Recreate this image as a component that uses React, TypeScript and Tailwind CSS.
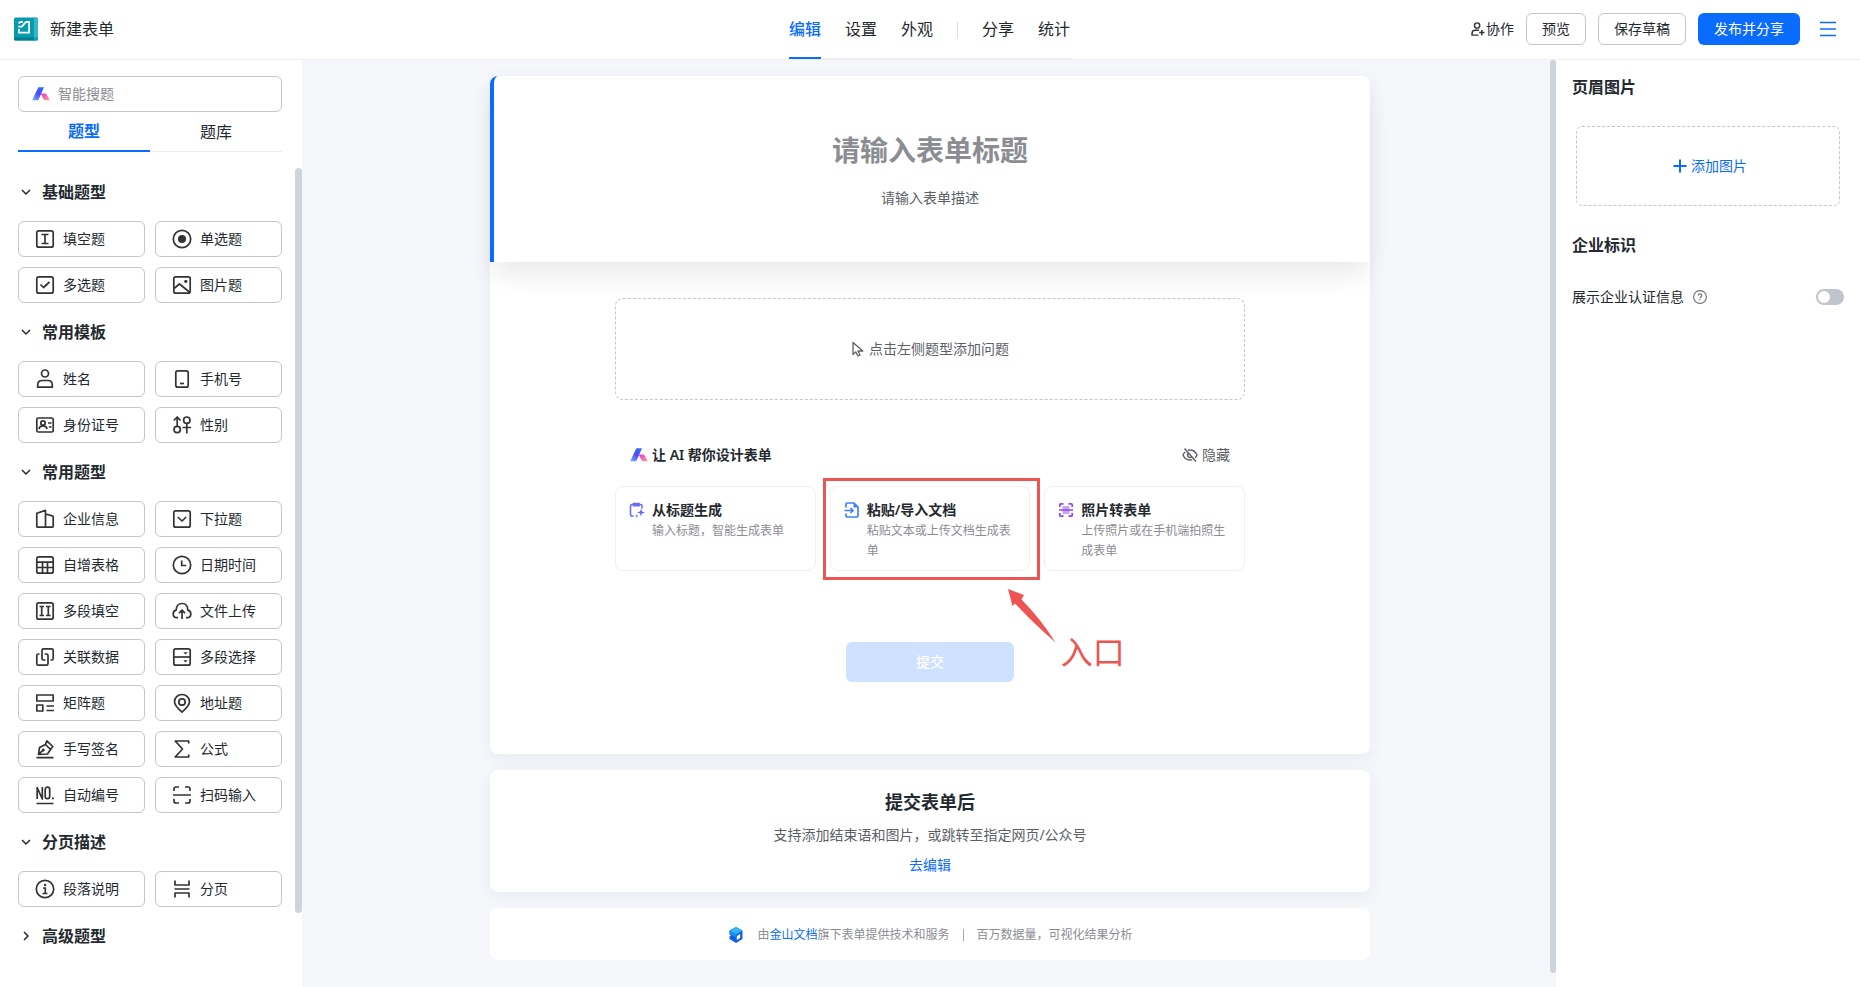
import { ReactNode, useState } from "react";

type IconProps = Readonly<{ children: ReactNode }>;

type QuestionType = {
  label: string;
  icon: ReactNode;
};

type QuestionGroup = {
  title: string;
  open: boolean;
  items: QuestionType[];
};

function Icon({ children }: IconProps) {
  return (
    <svg
      viewBox="0 0 20 20"
      className="size-5 shrink-0"
      fill="none"
      stroke="#333"
      strokeWidth="1.7"
      strokeLinejoin="round"
      aria-hidden="true"
    >
      {children}
    </svg>
  );
}

const frame = <rect x="1.8" y="1.8" width="16.4" height="16.4" rx="2" />;

const groups: QuestionGroup[] = [
  {
    title: "基础题型",
    open: true,
    items: [
      {
        label: "填空题",
        icon: <Icon>{frame}<path d="M6.5 5.5h7M6.5 14.5h7M10 5.5v9" /></Icon>,
      },
      {
        label: "单选题",
        icon: <Icon><circle cx="10" cy="10" r="8.7" /><circle cx="10" cy="10" r="4" fill="#333" stroke="none" /></Icon>,
      },
      {
        label: "多选题",
        icon: <Icon>{frame}<path d="M5.5 9.5l3 3 6-5.5" /></Icon>,
      },
      {
        label: "图片题",
        icon: <Icon>{frame}<path d="M2 13.5l5.5-4.5 10.5 8.5" /><circle cx="13.8" cy="6.3" r="1.6" fill="#333" stroke="none" /></Icon>,
      },
    ],
  },
  {
    title: "常用模板",
    open: true,
    items: [
      {
        label: "姓名",
        icon: <Icon><circle cx="10" cy="4.5" r="3.5" /><path d="M2.7 18.2V16c0-2.8 2-4.5 4.5-4.5h5.6c2.5 0 4.5 1.7 4.5 4.5v2.2z" /></Icon>,
      },
      {
        label: "手机号",
        icon: <Icon><rect x="3.8" y="1.8" width="12.4" height="16.4" rx="2" /><path d="M8 14.5h4" /></Icon>,
      },
      {
        label: "身份证号",
        icon: <Icon><rect x="1.8" y="3" width="16.4" height="14" rx="1.5" /><circle cx="8" cy="8" r="2.2" /><path d="M4 14.2c.3-2.5 1.800-3.400 4-3.400s3.700.9 4 3.400M13 8h3.500M13.800 12h2.700" /></Icon>,
      },
      {
        label: "性别",
        icon: <Icon><circle cx="5.2" cy="14.5" r="3.2" /><path d="M5.2 11.2V2.500M1.800 5.500l3.400-3.500 3.400 3.500" /><circle cx="14.8" cy="5.2" r="3.2" /><path d="M14.8 8.500v10M10.500 12.500h8.600" /></Icon>,
      },
    ],
  },
  {
    title: "常用题型",
    open: true,
    items: [
      {
        label: "企业信息",
        icon: <Icon><path d="M10.5 18.2H2.800a1 1 0 0 1-1-1V4.200l8.700-2.800zM10.500 5l6.800 1.900a1 1 0 0 1 .9 1v9.300a1 1 0 0 1-1 1H10.500" /></Icon>,
      },
      {
        label: "下拉题",
        icon: <Icon>{frame}<path d="M5.800 8l4.200 4 4.200-4" /></Icon>,
      },
      {
        label: "自增表格",
        icon: <Icon>{frame}<path d="M2 7.200h16M2 12.500h16M7.500 7.500v10.500M12.500 7.500v10.500" /></Icon>,
      },
      {
        label: "日期时间",
        icon: <Icon><circle cx="10" cy="10" r="8.7" /><path d="M9.700 5.500v5h4.500" /></Icon>,
      },
      {
        label: "多段填空",
        icon: <Icon>{frame}<path d="M4.500 5.500h4.500M4.500 14.500h4.500M6.700 5.500v9M11 5.500h4.500M11 14.500h4.500M13.300 5.500v9" /></Icon>,
      },
      {
        label: "文件上传",
        icon: <Icon><path d="M6 16.700H4.800C2.600 16.500 1.200 14.800 1.200 12.900c0-2 1.300-3.300 3-3.700C4.200 5 6.300 2.500 10 2.500s5.800 2.500 5.800 6.700c1.700.4 3 1.700 3 3.700 0 1.900-1.400 3.600-3.600 3.800H14M10 18V9.500M7 12.200l3-3 3 3" /></Icon>,
      },
      {
        label: "关联数据",
        icon: <Icon><path d="M10.500 13h-2A1.500 1.500 0 0 1 7 11.500V3.300a1.500 1.500 0 0 1 1.500-1.500h8.200a1.500 1.500 0 0 1 1.500 1.500v8.200a1.500 1.500 0 0 1-1.500 1.500H15.500" /><path d="M4.500 7H3.300a1.500 1.500 0 0 0-1.500 1.500v8.200a1.500 1.500 0 0 0 1.500 1.500h8.200a1.500 1.500 0 0 0 1.500-1.500V8.500A1.500 1.500 0 0 0 11.500 7H9.700" /></Icon>,
      },
      {
        label: "多段选择",
        icon: <Icon>{frame}<path d="M2 10h16" /><path d="M11.300 5.200h4.400l-2.200 2.300zM11.300 13.200h4.400l-2.200 2.300z" fill="#333" stroke="none" /></Icon>,
      },
      {
        label: "矩阵题",
        icon: <Icon><path d="M1.800 2h16.400v6H1.800zM1.800 12h6v6h-6zM11.500 13h7.500M11.500 17.500h7.500" /></Icon>,
      },
      {
        label: "地址题",
        icon: <Icon><path d="M10 19c-3.800-3.300-7.500-6.300-7.500-10.300C2.500 4.500 5.800 1.500 10 1.500s7.500 3 7.500 7.200C17.500 12.700 13.800 15.700 10 19z" /><circle cx="10" cy="9" r="3.200" /></Icon>,
      },
      {
        label: "手写签名",
        icon: <Icon><path d="M1.500 18.700h17M3.500 15.500l1-7 6-3 5 5-3 4.500zM10.500 5.500l1.300-3.700 6 5.700-2.300 3M3.500 15.500l4.300-4.200" /><circle cx="8.300" cy="11" r="1.500" fill="#333" stroke="none" /></Icon>,
      },
      {
        label: "公式",
        icon: <Icon><path d="M16.700 4.500V2H3.200l7.300 8-7.300 8h13.500v-2.500" /></Icon>,
      },
      {
        label: "自动编号",
        icon: <Icon><path d="M2.200 14V2.500L7.300 14V2M1.500 18.500h17" /><rect x="10.200" y="2.200" width="4.500" height="11.500" rx="2.200" /><path d="M17 12.500h1.800v1.800H17z" fill="#333" stroke="none" /></Icon>,
      },
      {
        label: "扫码输入",
        icon: <Icon><path d="M1 10h18M2 6V4a2 2 0 0 1 2-2h3M13 2h3a2 2 0 0 1 2 2v2M2 14v2a2 2 0 0 0 2 2h3M13 18h3a2 2 0 0 0 2-2v-2" /></Icon>,
      },
    ],
  },
  {
    title: "分页描述",
    open: true,
    items: [
      {
        label: "段落说明",
        icon: <Icon><circle cx="10" cy="10" r="8.7" /><path d="M8 9h2.300v5.200M7.500 14.500h5" /><circle cx="10" cy="6" r="1.200" fill="#333" stroke="none" /></Icon>,
      },
      {
        label: "分页",
        icon: <Icon><path d="M3 1.500V6h14V1.500M2.500 10h15M3 18.500V14h14v4.500" /></Icon>,
      },
    ],
  },
  { title: "高级题型", open: false, items: [] },
];

const aiCards = [
  {
    title: "从标题生成",
    desc: "输入标题，智能生成表单",
    icon: (
      <svg viewBox="0 0 16 16" className="size-4" fill="none" stroke="#6b6bf5" strokeWidth="1.6" aria-hidden="true">
        <path d="M4.500 14H3a1.500 1.500 0 0 1-1.500-1.500V4A1.500 1.500 0 0 1 3 2.500h8.500A1.500 1.500 0 0 1 13 4v2.500M4.500 3.800h5.500V1.500H4.500z" />
        <path d="M12 6.500l1 3 3 1-3 1-1 3-1-3-3-1 3-1zM7.800 12.300l.5 1.200 1.200.5-1.200.5-.5 1.200-.5-1.200-1.200-.5 1.200-.5z" fill="#6b6bf5" stroke="none" />
      </svg>
    ),
  },
  {
    title: "粘贴/导入文档",
    desc: "粘贴文本或上传文档生成表单",
    icon: (
      <svg viewBox="0 0 16 16" className="size-4" fill="none" stroke="#417ff9" strokeWidth="1.7" aria-hidden="true">
        <path d="M2 5.500V2.200A1.200 1.200 0 0 1 3.200 1H10l4 4v8.800a1.200 1.200 0 0 1-1.200 1.200H3.200A1.200 1.200 0 0 1 2 13.800V11.500M.5 8.500h7.500M6.500 6l2.500 2.500L6.500 11" />
        <path d="M9.500.5l5 5h-5z" fill="#417ff9" stroke="none" />
      </svg>
    ),
  },
  {
    title: "照片转表单",
    desc: "上传照片或在手机端拍照生成表单",
    icon: (
      <svg viewBox="0 0 16 16" className="size-4" fill="none" stroke="#8f45ee" strokeWidth="1.7" aria-hidden="true">
        <rect x="4.500" y="4" width="7" height="8" rx="1" fill="#c9a3f7" stroke="none" />
        <path d="M1 8h14M1.800 5V2.800a1 1 0 0 1 1-1H5.500M10.500 1.800h2.700a1 1 0 0 1 1 1V5M1.800 11v2.200a1 1 0 0 0 1 1H5.500M10.500 14.200h2.700a1 1 0 0 0 1-1V11" />
      </svg>
    ),
  },
];

function AiLogo() {
  return (
    <svg viewBox="0 0 18 14" className="h-3.5 w-[18px] shrink-0" aria-hidden="true">
      <defs>
        <linearGradient id="aiLeft" x1="0.8" y1="0" x2="0.2" y2="1">
          <stop offset="0" stopColor="#2f6bff" />
          <stop offset="0.5" stopColor="#4a4ff0" />
          <stop offset="1" stopColor="#6fa2ff" />
        </linearGradient>
        <linearGradient id="aiRight" x1="0" y1="0" x2="1" y2="1">
          <stop offset="0" stopColor="#e633e0" />
          <stop offset="1" stopColor="#ffa18a" />
        </linearGradient>
      </defs>
      <path d="M6 .9A1 1 0 0 1 7 .3h5L6.500 12.700a1 1 0 0 1-.9.600H.2z" fill="url(#aiLeft)" />
      <path d="M8.600 6.600h4.800a1.200 1.200 0 0 1 1.100.7l3.300 6h-4.700a1.500 1.500 0 0 1-1.300-.8z" fill="url(#aiRight)" />
    </svg>
  );
}

function Header() {
  return (
    <header className="grid h-[60px] grid-cols-[1fr_auto_1fr] border-b border-[#ebedef] bg-white">
      <div className="flex items-center gap-3 pb-px pl-3.5 text-base">
        <svg viewBox="0 0 24 24" className="size-6" aria-hidden="true">
          <rect width="24" height="23" y="0.5" rx="1.5" fill="#079bb0" />
          <path d="M20 .5h2.500A1.500 1.500 0 0 1 24 2v18.500h-4z" fill="#34b7c9" />
          <path d="M0 20.500h20v3H1.500A1.500 1.500 0 0 1 0 22z" fill="#017f90" />
          <path d="M20 20.500h4V22a1.500 1.500 0 0 1-1.500 1.500H20z" fill="#16a3b5" />
          <path d="M11.500 5h3.600v10.700H4.900V12M4.500 6.200l2-1.200h2.300M4.300 9.700h3.500l3.800-4.300" fill="none" stroke="#fff" strokeWidth="1.800" />
        </svg>
        新建表单
      </div>

      <nav className="flex items-stretch gap-6 pr-px text-base shadow-[inset_0_-1px_0_#efefef]">
        <a href="#edit" className="flex items-center border-b-2 border-[#0a6cff] font-medium text-[#0a6cff]">编辑</a>
        <a href="#settings" className="flex items-center pb-px">设置</a>
        <a href="#theme" className="flex items-center pb-px">外观</a>
        <span className="my-auto h-4 w-px bg-[#dcdee1]" />
        <a href="#share" className="flex items-center pb-px">分享</a>
        <a href="#stats" className="flex items-center pb-px">统计</a>
      </nav>

      <div className="flex items-center justify-end gap-3 pr-6 pb-0.5 text-sm">
        <button className="flex items-center gap-px">
          <svg viewBox="0 0 16 16" className="size-3.5" fill="none" stroke="#333" strokeWidth="1.7" aria-hidden="true">
            <circle cx="7" cy="4" r="3" />
            <path d="M8.500 15H1.200v-2c0-2.200 1.500-3.500 3.600-3.500H9M12.300 9v6M9.300 12h6" />
          </svg>
          协作
        </button>
        <button className="h-8 rounded-md border border-[#c4c6c9] px-[15px]">预览</button>
        <button className="h-8 rounded-md border border-[#c4c6c9] px-[15px]">保存草稿</button>
        <button className="h-8 rounded-md bg-[#0a6cff] px-4 text-white">发布并分享</button>
        <button aria-label="菜单" className="pl-2">
          <svg viewBox="0 0 16 16" className="size-4" stroke="#0a6cff" strokeWidth="1.3" aria-hidden="true">
            <path d="M0 1.500h16M0 8h16M0 14.500h16" />
          </svg>
        </button>
      </div>
    </header>
  );
}

function Sidebar() {
  return (
    <aside className="relative w-[302px] shrink-0 bg-white pt-4 pr-5 pl-[18px]">
      <label className="flex h-9 items-center gap-2 rounded-md border border-[#c4c6c9] px-[13px]">
        <AiLogo />
        <input
          type="text"
          aria-label="智能搜题"
          placeholder="智能搜题"
          className="w-full text-sm outline-none placeholder:text-[#8b8d92]"
        />
      </label>

      <div role="tablist" className="mb-[11px] grid h-10 grid-cols-2 text-base shadow-[inset_0_-1px_0_#ebedef]">
        <button role="tab" aria-selected="true" className="border-b-2 border-[#0a6cff] font-semibold text-[#0a6cff]">
          题型
        </button>
        <button role="tab" aria-selected="false">题库</button>
      </div>

      {groups.map((group) => (
        <section key={group.title}>
          <button className="flex h-[58px] w-full items-center gap-2.5 pl-0.5 text-left text-base font-semibold">
            <svg
              viewBox="0 0 12 12"
              className={group.open ? "size-3" : "size-3 -rotate-90"}
              fill="none"
              stroke="#24292f"
              strokeWidth="1.5"
              aria-hidden="true"
            >
              <path d="M2 4l4 4 4-4" />
            </svg>
            {group.title}
          </button>
          {group.open && (
            <div className="grid grid-cols-2 gap-2.5">
              {group.items.map((item) => (
                <button
                  key={item.label}
                  className="flex h-9 items-center gap-2 rounded-md border border-[#c4c6c9] pl-4 text-sm"
                >
                  {item.icon}
                  {item.label}
                </button>
              ))}
            </div>
          )}
        </section>
      ))}

      {/* scroll thumb */}
      <div className="absolute top-[108px] right-0 h-[745px] w-[7px] rounded-full bg-[#ced4db]" />
    </aside>
  );
}

/* Red callout that marks the import entry */
function Callout() {
  return (
    <>
      <div className="pointer-events-none absolute -top-2 -right-2.5 -bottom-[9px] -left-[7px] border-3 border-[#ec5551]" />
      <svg viewBox="0 0 48 54" className="absolute top-[103px] left-[178px] h-[54px] w-12" aria-hidden="true">
        <path d="M0 0l16 6-2.500 4.500Q32 29 47.500 53.500 25 34 7 14.500L4.500 17z" fill="#ec5551" />
      </svg>
      <span className="absolute top-[142px] left-[231px] text-[32px] leading-12 whitespace-nowrap text-[#ec5551]">
        入口
      </span>
    </>
  );
}

function Editor() {
  return (
    <main className="relative flex flex-1 flex-col items-center gap-4 bg-[#f5f7fb] pt-4 pr-6 pb-7 pl-[26px]">
      <div className="w-full max-w-[880px] rounded-lg bg-white shadow-[0_4px_16px_rgba(60,90,110,0.08)]">
        <div className="flex h-[186px] flex-col items-center rounded-tl-lg border-l-4 border-[#0a6cff] pt-[53px] pr-1 shadow-[0_16px_28px_-4px_rgba(0,0,0,0.09)]">
          <h1 className="text-[28px] leading-[42px] font-bold text-[#8b8d92]">请输入表单标题</h1>
          <p className="mt-4 text-sm leading-[22px] text-[#5c5f66]">请输入表单描述</p>
        </div>

        <div className="mx-auto flex w-[630px] max-w-full flex-col pt-9 pb-[72px]">
          <div className="flex h-[102px] items-center justify-center gap-1 rounded-lg border border-dashed border-[#c4c6c9] text-sm text-[#5c5f66]">
            <svg viewBox="0 0 14 16" className="h-4 w-3.5" fill="none" stroke="#5c5f66" strokeWidth="1.3" strokeLinejoin="round" aria-hidden="true">
              <path d="M2 1.500v12l2.700-2.600L7 15l2-1-2-4h4.800z" />
            </svg>
            点击左侧题型添加问题
          </div>

          <div className="mt-11 flex h-[22px] items-center gap-1 px-[15px] text-sm">
            <AiLogo />
            <h2 className="font-semibold">让 AI 帮你设计表单</h2>
            <button className="ml-auto flex items-center gap-1 text-[#5c5f66]">
              <svg viewBox="0 0 16 16" className="size-4" fill="none" stroke="#5c5f66" strokeWidth="1.4" aria-hidden="true">
                <path d="M6 3.200A7.500 7.500 0 0 1 8 3c3.500 0 5.800 2.200 7 5-.4 1-1 1.900-1.800 2.700M10.300 12.700A7.300 7.300 0 0 1 8 13c-3.500 0-5.800-2.200-7-5 .5-1.300 1.300-2.400 2.400-3.300M6.300 6.500a2.200 2.200 0 0 0 3.200 3.200M2.500 1.500l11.500 13" />
              </svg>
              隐藏
            </button>
          </div>

          <div className="mt-5 grid grid-cols-3 gap-3.5">
            {aiCards.map((card, index) => (
              <div key={card.title} className="relative">
                <button className="flex h-[85px] w-full items-start gap-[7px] rounded-lg border border-[#f0f0f1] py-3 pr-3 pl-[13px] text-left">
                  <span className="pt-[3px]">{card.icon}</span>
                  <span>
                    <span className="block text-sm leading-[22px] font-semibold">{card.title}</span>
                    <span className="block text-xs leading-5 text-[#8b8d92]">{card.desc}</span>
                  </span>
                </button>
                {index === 1 && <Callout />}
              </div>
            ))}
          </div>

          <button className="mt-[71px] h-10 w-[168px] self-center rounded-md bg-[#cee1ff] text-sm font-medium text-white">
            提交
          </button>
        </div>
      </div>

      <section className="flex w-full max-w-[880px] flex-col items-center rounded-lg bg-white pt-[18px] pb-4 shadow-[0_4px_16px_rgba(60,90,110,0.08)]">
        <h2 className="text-lg leading-7 font-bold">提交表单后</h2>
        <p className="mt-2 text-sm leading-[22px] text-[#5c5f66]">支持添加结束语和图片，或跳转至指定网页/公众号</p>
        <a href="#after-submit" className="mt-2 text-sm leading-[22px] text-[#0a6cff]">去编辑</a>
      </section>

      <footer className="flex h-[52px] w-full max-w-[880px] items-center justify-center rounded-lg bg-white pt-0.5 pl-0.5 text-xs text-[#8b8d92]">
        <svg viewBox="0 0 14 16" className="mr-3.5 h-4 w-3.5" aria-hidden="true">
          <path d="M7 0l6.500 3.500v8.500L7 16 .5 12V9.500L2 8.500.5 7.500v-4z" fill="#0d62e8" />
          <path d="M7 0l6.500 3.500L7 7.500.5 3.500z" fill="#35b4ff" />
          <path d="M.5 3.500L7 7.500V10L.5 7z" fill="#1f8dfa" />
          <path d="M7.800 9l3.400-2v4l-3.400 2z" fill="#fff" />
        </svg>
        <span>
          由<a href="#kdocs" className="text-[#0a6cff]">金山文档</a>旗下表单提供技术和服务
        </span>
        <span className="mx-[13px] h-3 w-px bg-[#a5a7ab]" />
        <span>百万数据量，可视化结果分析</span>
      </footer>

      {/* scroll thumb */}
      <div className="absolute top-0 right-0 bottom-[15px] w-1.5 rounded-full bg-[#ced4db]" />
    </main>
  );
}

function SettingsPanel() {
  const [showCert, setShowCert] = useState(false);

  return (
    <aside className="flex w-[304px] shrink-0 flex-col bg-white pt-[15px] pr-4 pl-4">
      <h2 className="text-base leading-6 font-semibold">页眉图片</h2>
      <button className="mx-1 mt-[27px] flex h-20 items-center justify-center gap-1 rounded-md border border-dashed border-[#c4c6c9] pl-1 text-sm text-[#0a6cff]">
        <svg viewBox="0 0 14 14" className="size-3.5" stroke="#0a6cff" strokeWidth="2" aria-hidden="true">
          <path d="M7 .5v13M.5 7h13" />
        </svg>
        添加图片
      </button>

      <h2 className="mt-[27px] text-base leading-6 font-semibold">企业标识</h2>
      <div className="mt-7 flex h-6 items-center text-sm">
        <label htmlFor="show-cert">展示企业认证信息</label>
        <svg viewBox="0 0 14 14" className="ml-[9px] size-3.5" fill="none" stroke="#6b6e75" strokeWidth="1.1" aria-hidden="true">
          <circle cx="7" cy="7" r="6.4" />
          <path d="M5.200 5.600c0-1 .8-1.700 1.800-1.700s1.800.7 1.800 1.600c0 1.300-1.800 1.300-1.800 2.700M7 9.300v1.200" />
        </svg>
        <span className="relative ml-auto inline-flex">
          <input
            id="show-cert"
            type="checkbox"
            checked={showCert}
            onChange={(e) => setShowCert(e.target.checked)}
            className="peer h-4 w-7 appearance-none rounded-full bg-[#bfc4cd] checked:bg-[#0a6cff]"
          />
          <span className="pointer-events-none absolute top-0.5 left-0.5 size-3 rounded-full bg-white peer-checked:left-3.5" />
        </span>
      </div>
    </aside>
  );
}

export default function App() {
  return (
    <div className="flex min-h-screen flex-col bg-white font-['Noto_Sans','Noto_Sans_CJK_SC',sans-serif] text-[#24292f]">
      <Header />
      <div className="flex flex-1">
        <Sidebar />
        <Editor />
        <SettingsPanel />
      </div>
    </div>
  );
}
